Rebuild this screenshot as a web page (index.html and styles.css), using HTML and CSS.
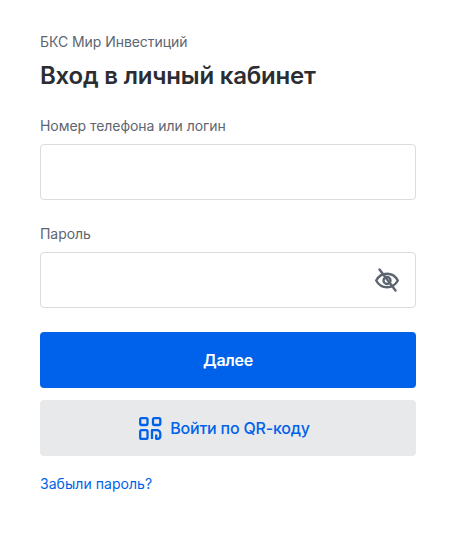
FILE: index.html
```html
<!DOCTYPE html>
<html lang="ru">
<head>
<meta charset="utf-8">
<title>Вход</title>
<link rel="stylesheet" href="styles.css">
</head>
<body>
<main class="card">
  <p class="brand">БКС Мир Инвестиций</p>
  <h1 class="title">Вход в личный кабинет</h1>
  <form class="form">
    <div class="field">
      <label class="label">Номер телефона или логин</label>
      <div class="input"></div>
    </div>
    <div class="field">
      <label class="label">Пароль</label>
      <div class="input input-icon">
        <svg class="eye" viewBox="0 0 24 24" width="24" height="24" fill="none" stroke="#5d6570" stroke-width="2.400" stroke-linecap="round" stroke-linejoin="round">
          <path d="M1.200 12.500C3.500 8.200 7.400 5.800 12 5.800S20.500 8.200 22.800 12.500C20.500 16.800 16.600 19.200 12 19.200S3.500 16.800 1.200 12.500Z"/>
          <circle cx="12" cy="12.500" r="3.500"/>
          <path d="M4.500 1.500L20.500 22.500"/>
        </svg>
      </div>
    </div>
    <button class="btn btn-primary" type="button">Далее</button>
    <button class="btn btn-secondary" type="button">
      <svg class="qr" viewBox="0 0 24 24" width="24" height="24" fill="none" stroke="#0062ea" stroke-width="2.300" stroke-linejoin="round" stroke-linecap="butt">
        <rect x="2.200" y="2.200" width="7.300" height="6.800" rx="1.400"/>
        <rect x="15" y="2.200" width="7.300" height="6.800" rx="1.400"/>
        <rect x="2.200" y="14.200" width="7.300" height="8.600" rx="1.400"/>
        <path d="M14 23V14.200H19a3.300 3.300 0 0 1 3.300 3.300V20a2.800 2.800 0 0 1-2.800 2.800H18.200V18.500"/>
      </svg>
      <span class="btn-label">Войти по QR-коду</span>
    </button>
  </form>
  <a class="link" href="#">Забыли пароль?</a>
</main>
</body>
</html>
```
FILE: styles.css
```css
* { box-sizing: border-box; }
html, body { margin: 0; background: #fff; }
body { font-family: Inter, "Noto Sans", sans-serif; color: #2b2d33; }
.card { width: 456px; height: 560px; padding: 32px 40px 0; overflow: hidden; }
.brand { margin: 0; font-size: 14px; line-height: 20px; color: #5d6570; letter-spacing: -0.05px; }
.title { margin: 8px 0 0; font-size: 24px; line-height: 32px; font-weight: 600; color: #2b2d33; letter-spacing: -0.2px; }
.form { display: flex; flex-direction: column; margin-top: 24px; }
.field { display: flex; flex-direction: column; gap: 8px; margin-bottom: 24px; }
.label { font-size: 14px; line-height: 20px; color: #5d6570; letter-spacing: -0.05px; }
.input { height: 56px; border: 1px solid #d9dbdf; border-radius: 4px; background: #fff; }
.input-icon { display: flex; align-items: center; justify-content: flex-end; padding-right: 16px; }
.btn { display: flex; align-items: center; justify-content: center; gap: 8px; height: 56px; border: 0; border-radius: 4px; font-family: inherit; font-size: 16px; font-weight: 600; letter-spacing: -0.3px; }
.btn-primary { background: #0062ea; color: #fff; }
.btn-secondary { margin-top: 12px; background: #e8e9eb; color: #0062ea; font-weight: 500; letter-spacing: -0.2px; }
.btn-label { margin-right: 8px; }
.link { display: block; margin-top: 18px; font-size: 14px; line-height: 20px; color: #0062ea; text-decoration: none; letter-spacing: 0.05px; }
```
